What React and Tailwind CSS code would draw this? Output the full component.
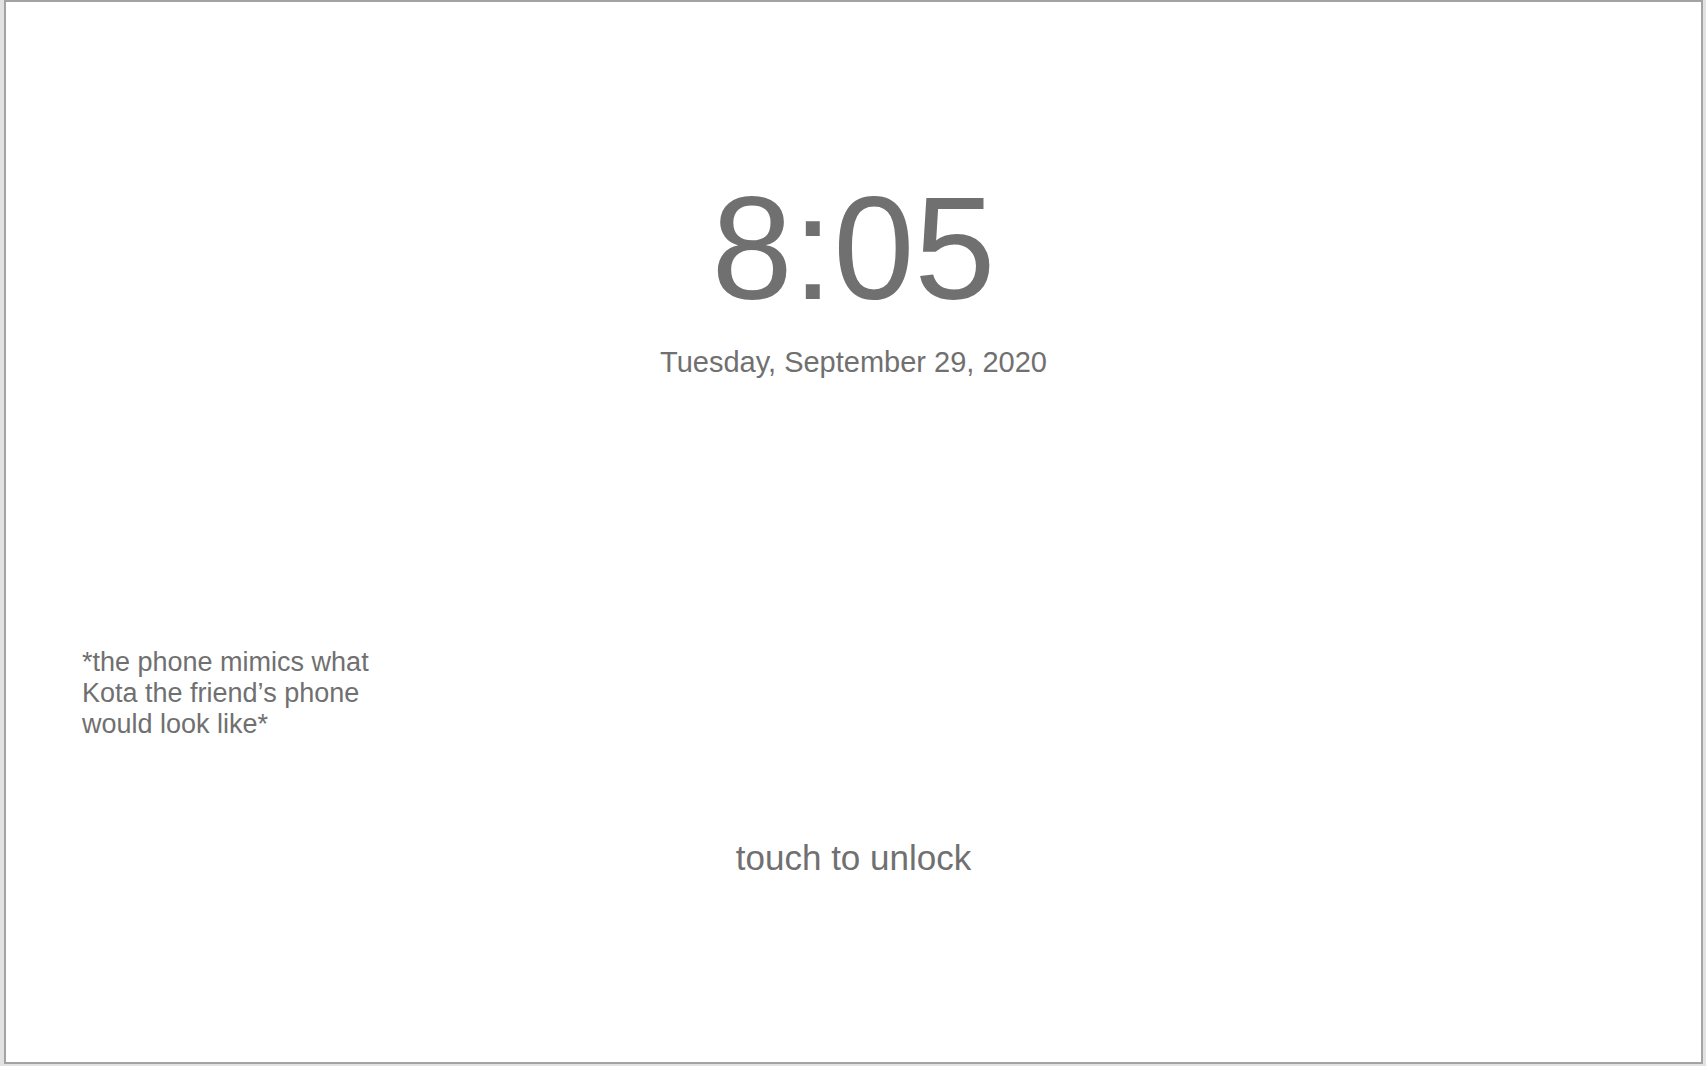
export default function App() {
  return (
    <div className="h-[1066px] w-full bg-[#e2e2e2] pl-1 pr-[3px] pb-[2px] font-['Liberation_Sans',Arial,sans-serif] text-[#707070]">
      <div className="h-full border-2 border-[#a3a3a3] bg-white flex flex-col">
        <div className="mt-[174px] text-center text-[146px] leading-none">8:05</div>
        <div className="mt-[26px] text-center text-[29px] leading-none">Tuesday, September 29, 2020</div>
        <div className="mt-[270px] pl-[76px] text-[27px] leading-[31px]">
          <p>*the phone mimics what</p>
          <p>Kota the friend’s phone</p>
          <p>would look like*</p>
        </div>
        <div className="mt-[100px] text-center text-[35px] leading-none">touch to unlock</div>
      </div>
    </div>
  );
}
